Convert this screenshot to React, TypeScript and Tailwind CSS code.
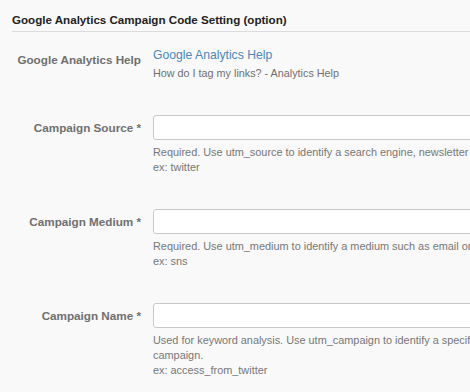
import React from "react";

const font = { fontFamily: '"Liberation Sans", Arial, sans-serif' };

function Row({
  label,
  children,
}: {
  label: string;
  children: React.ReactNode;
}) {
  return (
    <div className="flex items-start gap-[12px]">
      <div className="w-[141px] shrink-0 text-right text-[11.7px] font-bold leading-[25px] text-[#707070]">
        {label}
      </div>
      <div className="flex min-w-0 flex-col">{children}</div>
    </div>
  );
}

function Field({ label, lines }: { label: string; lines: string[] }) {
  return (
    <Row label={label}>
      <input
        type="text"
        className="h-[25px] w-[420px] rounded-[3px] border border-[#c8c8c8] bg-white px-2 outline-none"
      />
      <div className="mt-[5px] w-[420px] text-[10.9px] leading-[15px] text-[#777]">
        {lines.map((l, i) => (
          <div key={i} className="whitespace-nowrap">
            {l}
          </div>
        ))}
      </div>
    </Row>
  );
}

export default function App() {
  return (
    <div
      className="h-[392px] w-[470px] overflow-hidden bg-[#f8f9f8]"
      style={font}
    >
      <div className="ml-[12px] border-b border-[#dcdcdc] pt-[12px] pb-[4px] text-[11.6px] font-bold leading-[15px] text-[#222]">
        Google Analytics Campaign Code Setting (option)
      </div>

      <div className="mt-[14px] flex items-start gap-[12px]">
        <div className="w-[141px] shrink-0 pt-[5px] text-right text-[11.7px] font-bold leading-[18px] text-[#707070]">
          Google Analytics Help
        </div>
        <div className="flex flex-col">
          <a className="text-[12.2px] leading-[18px] text-[#4a88b8]">
            Google Analytics Help
          </a>
          <span className="text-[10.8px] leading-[18px] text-[#707070]">
            How do I tag my links? - Analytics Help
          </span>
        </div>
      </div>

      <div className="mt-[33px] flex flex-col gap-[34px]">
        <Field
          label="Campaign Source *"
          lines={[
            "Required. Use utm_source to identify a search engine, newsletter name, or other source.",
            "ex: twitter",
          ]}
        />
        <Field
          label="Campaign Medium *"
          lines={[
            "Required. Use utm_medium to identify a medium such as email or cost-per-click.",
            "ex: sns",
          ]}
        />
        <Field
          label="Campaign Name *"
          lines={[
            "Used for keyword analysis. Use utm_campaign to identify a specific",
            "campaign.",
            "ex: access_from_twitter",
          ]}
        />
      </div>
    </div>
  );
}
